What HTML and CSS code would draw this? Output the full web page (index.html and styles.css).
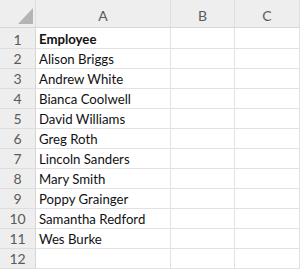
FILE: index.html
```html
<!DOCTYPE html>
<html>
<head>
<meta charset="utf-8">
<link rel="stylesheet" href="styles.css">
</head>
<body>
<div class="sheet">
  <div class="corner"><span class="tri"></span></div>
  <div class="colhead">A</div>
  <div class="colhead">B</div>
  <div class="colhead">C</div>

  <div class="rowhead first">1</div><div class="cell first bold">Employee</div><div class="cell first"></div><div class="cell first"></div>
  <div class="rowhead">2</div><div class="cell">Alison Briggs</div><div class="cell"></div><div class="cell"></div>
  <div class="rowhead">3</div><div class="cell">Andrew White</div><div class="cell"></div><div class="cell"></div>
  <div class="rowhead">4</div><div class="cell">Bianca Coolwell</div><div class="cell"></div><div class="cell"></div>
  <div class="rowhead">5</div><div class="cell">David Williams</div><div class="cell"></div><div class="cell"></div>
  <div class="rowhead">6</div><div class="cell">Greg Roth</div><div class="cell"></div><div class="cell"></div>
  <div class="rowhead">7</div><div class="cell">Lincoln Sanders</div><div class="cell"></div><div class="cell"></div>
  <div class="rowhead">8</div><div class="cell">Mary Smith</div><div class="cell"></div><div class="cell"></div>
  <div class="rowhead">9</div><div class="cell">Poppy Grainger</div><div class="cell"></div><div class="cell"></div>
  <div class="rowhead">10</div><div class="cell">Samantha Redford</div><div class="cell"></div><div class="cell"></div>
  <div class="rowhead">11</div><div class="cell">Wes Burke</div><div class="cell"></div><div class="cell"></div>
  <div class="rowhead">12</div><div class="cell"></div><div class="cell"></div><div class="cell"></div>
</div>
</body>
</html>
```
FILE: styles.css
```css
html, body {
  margin: 0;
  padding: 0;
  background: #ffffff;
}
.sheet {
  display: grid;
  grid-template-columns: 36px 135px 64px 65px;
  grid-template-rows: 28px 21px repeat(11, 20px);
  width: 300px;
  font-family: Lato, "Open Sans", sans-serif;
  font-size: 13.2px;
}
.corner, .colhead {
  background: #eeeeee;
  border-right: 1px solid #dedede;
  border-bottom: 1px solid #d6d6d6;
  box-sizing: border-box;
}
.corner {
  position: relative;
}
.tri {
  position: absolute;
  right: 2px;
  bottom: 3px;
  width: 0;
  height: 0;
  border-left: 15px solid transparent;
  border-bottom: 16px solid #b4b4b4;
}
.colhead {
  display: flex;
  align-items: center;
  justify-content: center;
  color: #5a5a5a;
  font-size: 14px;
  padding-top: 4px;
}
.rowhead {
  background: #eeeeee;
  border-right: 1px solid #d6d6d6;
  border-bottom: 1px solid #dedede;
  box-sizing: border-box;
  display: flex;
  align-items: center;
  justify-content: center;
  color: #5a5a5a;
  font-size: 14px;
}
.cell {
  border-right: 1px solid #e2e2e2;
  border-bottom: 1px solid #e2e2e2;
  box-sizing: border-box;
  display: flex;
  align-items: center;
  padding-left: 3px;
  padding-top: 1px;
  color: #111111;
  white-space: nowrap;
}
.first {
  padding-top: 2px;
}
.bold {
  font-weight: bold;
}
```
